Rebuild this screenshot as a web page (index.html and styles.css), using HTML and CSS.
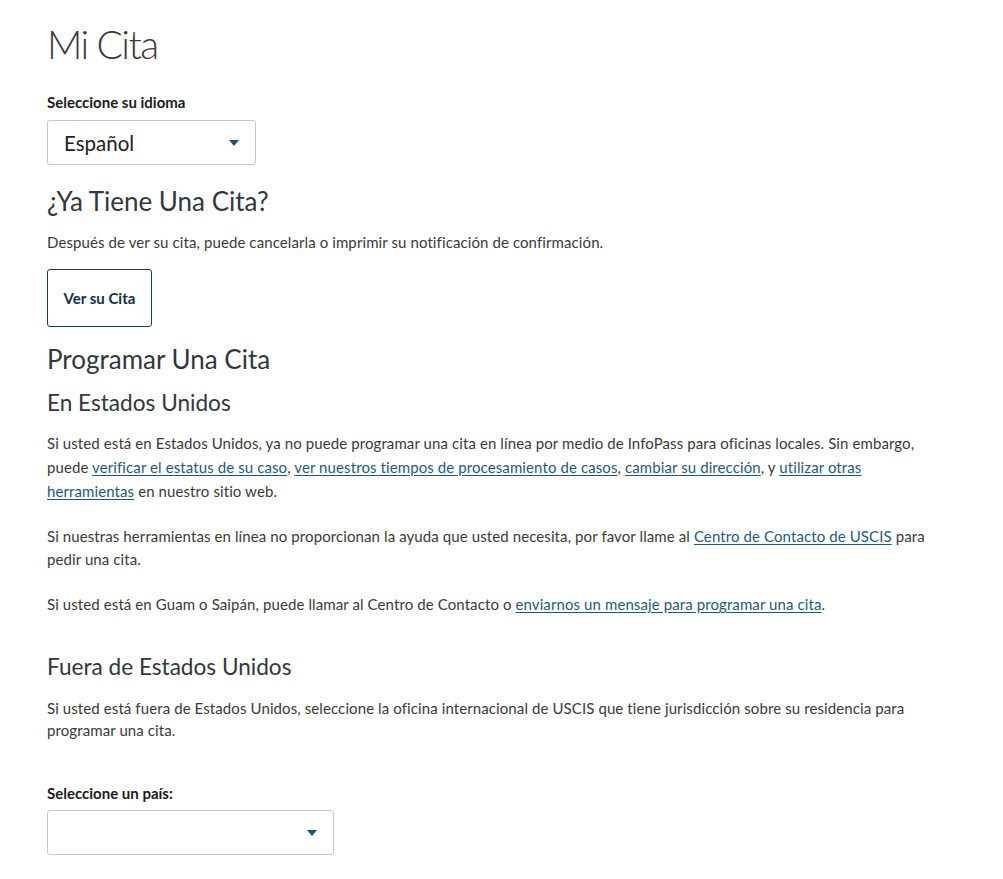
FILE: index.html
```html
<!DOCTYPE html>
<html lang="es">
<head>
<meta charset="utf-8">
<title>Mi Cita</title>
<link rel="stylesheet" href="styles.css">
</head>
<body>
<main class="page">
  <h1 class="title">Mi Cita</h1>

  <label class="field-label lang-label">Seleccione su idioma</label>
  <div class="select select-lang">
    <span class="select-value">Español</span>
    <svg class="caret" width="10" height="6" viewBox="0 0 10 6"><path d="M0 0H10L5 6Z"/></svg>
  </div>

  <h2 class="h2 h2-first">¿Ya Tiene Una Cita?</h2>
  <p class="text text-intro">Después de ver su cita, puede cancelarla o imprimir su notificación de confirmación.</p>
  <button class="btn" type="button">Ver su Cita</button>

  <h2 class="h2 h2-second">Programar Una Cita</h2>
  <h3 class="h3 h3-first">En Estados Unidos</h3>
  <p class="text text-us1">Si usted está en Estados Unidos, ya no puede programar una cita en línea por medio de InfoPass para oficinas locales. Sin embargo, puede <a href="#">verificar el estatus de su caso</a>, <a href="#">ver nuestros tiempos de procesamiento de casos</a>, <a href="#">cambiar su dirección</a>, y <a href="#">utilizar otras herramientas</a> en nuestro sitio web.</p>
  <p class="text text-us2">Si nuestras herramientas en línea no proporcionan la ayuda que usted necesita, por favor llame al <a href="#">Centro de Contacto de USCIS</a> para pedir una cita.</p>
  <p class="text text-us3">Si usted está en Guam o Saipán, puede llamar al Centro de Contacto o <a href="#">enviarnos un mensaje para programar una cita</a>.</p>

  <h3 class="h3 h3-second">Fuera de Estados Unidos</h3>
  <p class="text text-out">Si usted está fuera de Estados Unidos, seleccione la oficina internacional de USCIS que tiene jurisdicción sobre su residencia para programar una cita.</p>

  <label class="field-label country-label">Seleccione un país:</label>
  <div class="select select-country">
    <span class="select-value"></span>
    <svg class="caret" width="10" height="6" viewBox="0 0 10 6"><path d="M0 0H10L5 6Z"/></svg>
  </div>
</main>
</body>
</html>
```

FILE: styles.css
```css
html, body {
  margin: 0;
  padding: 0;
  background: #ffffff;
}

body {
  font-family: Lato, "Liberation Sans", sans-serif;
  color: #333333;
}

.page {
  display: flex;
  flex-direction: column;
  align-items: flex-start;
  padding: 20px 0 0 47px;
  width: 900px;
}

.title {
  margin: 0;
  font-size: 39px;
  line-height: 48px;
  font-weight: 300;
  letter-spacing: -1.6px;
  color: #3a3a3a;
}

.field-label {
  display: block;
  font-size: 15px;
  line-height: 20px;
  font-weight: 700;
  color: #1b1b1b;
}

.lang-label { margin-top: 24px; }
.country-label { margin-top: 42px; }

.select {
  box-sizing: border-box;
  height: 45px;
  border: 1px solid #c9c9c9;
  border-radius: 3px;
  display: flex;
  align-items: center;
  justify-content: space-between;
  padding: 0 16px 0 16px;
  background: #fff;
}

.select-lang {
  width: 209px;
  margin-top: 8px;
}

.select-country {
  width: 287px;
  margin-top: 7px;
}

.select-value {
  font-size: 20.5px;
  color: #222;
}

.caret {
  fill: #1d5475;
}

.h2 {
  margin: 0;
  font-size: 26px;
  line-height: 32px;
  font-weight: 400;
  color: #30383d;
}

.h2-first { margin-top: 20px; }
.h2-second { margin-top: 16px; }

.h3 {
  margin: 0;
  font-size: 22.6px;
  line-height: 28px;
  font-weight: 400;
  color: #30383d;
}

.h3-first { margin-top: 14px; }
.h3-second { margin-top: 37px; }

.text {
  margin: 0;
  font-size: 15px;
  letter-spacing: 0.1px;
  line-height: 24px;
  color: #3a3a3a;
}

.text-intro { margin-top: 13px; }
.text-us1 { margin-top: 14px; }
.text-us2 { margin-top: 22px; line-height: 23px; }
.text-us3 { margin-top: 21px; }
.text-out { margin-top: 16px; line-height: 22px; }

.text a {
  color: #1f5a7c;
  text-decoration: underline;
  text-underline-offset: 2px;
}

.btn {
  margin-top: 15px;
  box-sizing: border-box;
  width: 105px;
  height: 58px;
  background: #fff;
  border: 1px solid #15405c;
  border-radius: 3px;
  font-family: Lato, "Liberation Sans", sans-serif;
  font-size: 15px;
  font-weight: 700;
  color: #0f2f47;
  padding: 0;
}
```
